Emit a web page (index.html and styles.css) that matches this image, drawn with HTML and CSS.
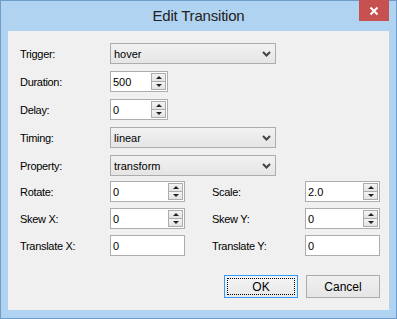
FILE: index.html
```html
<!DOCTYPE html>
<html lang="en">
<head>
  <meta charset="UTF-8">
  <title>Edit Transition</title>
  <link rel="stylesheet" href="styles.css">
</head>
<body>
  <div class="window">
    <div class="titlebar">
      <span class="title">Edit Transition</span>
      <div class="close">
        <svg width="10" height="10" viewBox="0 0 10 10"><path d="M1.5 1.5 L8.5 8.5 M8.5 1.5 L1.5 8.5" stroke="#fff" stroke-width="2"/></svg>
      </div>
    </div>

    <div class="content">
      <div class="fields">
        <label>Trigger:</label>
        <div class="select"><span>hover</span><svg class="chev" width="9" height="6" viewBox="0 0 9 6"><path d="M1 1 L4.5 4.5 L8 1" fill="none" stroke="#444" stroke-width="2"/></svg></div>

        <label>Duration:</label>
        <div class="box spin short"><span class="val">500</span><div class="arrows"><div class="arr up"></div><div class="arr down"></div></div></div>

        <label>Delay:</label>
        <div class="box spin short"><span class="val">0</span><div class="arrows"><div class="arr up"></div><div class="arr down"></div></div></div>

        <label>Timing:</label>
        <div class="select"><span>linear</span><svg class="chev" width="9" height="6" viewBox="0 0 9 6"><path d="M1 1 L4.5 4.5 L8 1" fill="none" stroke="#444" stroke-width="2"/></svg></div>

        <label>Property:</label>
        <div class="select"><span>transform</span><svg class="chev" width="9" height="6" viewBox="0 0 9 6"><path d="M1 1 L4.5 4.5 L8 1" fill="none" stroke="#444" stroke-width="2"/></svg></div>
      </div>

      <div class="transform">
        <label>Rotate:</label>
        <div class="box spin"><span class="val">0</span><div class="arrows"><div class="arr up"></div><div class="arr down"></div></div></div>
        <span></span>
        <label>Scale:</label>
        <div class="box spin"><span class="val">2.0</span><div class="arrows"><div class="arr up"></div><div class="arr down"></div></div></div>

        <label>Skew X:</label>
        <div class="box spin"><span class="val">0</span><div class="arrows"><div class="arr up"></div><div class="arr down"></div></div></div>
        <span></span>
        <label>Skew Y:</label>
        <div class="box spin"><span class="val">0</span><div class="arrows"><div class="arr up"></div><div class="arr down"></div></div></div>

        <label>Translate X:</label>
        <div class="box"><span class="val">0</span></div>
        <span></span>
        <label>Translate Y:</label>
        <div class="box"><span class="val">0</span></div>
      </div>

      <div class="actions">
        <div class="btn default">OK</div>
        <div class="btn">Cancel</div>
      </div>
    </div>
  </div>
</body>
</html>
```

FILE: styles.css
```css
body {
  margin: 0;
  font-family: "Liberation Sans", Arial, sans-serif;
  font-size: 11px;
  color: #000;
}

.window {
  width: 397px;
  height: 319px;
  box-sizing: border-box;
  border: 1px solid #6f9dc9;
  background: #afd3f0;
  padding: 0 7px 8px;
  display: flex;
  flex-direction: column;
}

.titlebar {
  height: 30px;
  position: relative;
  display: flex;
  align-items: center;
  justify-content: center;
}

.title {
  font-size: 15px;
  color: #222;
  padding-bottom: 1px;
  letter-spacing: -0.2px;
}

.close {
  position: absolute;
  top: -1px;
  right: 0;
  width: 30px;
  height: 21px;
  background: #c75050;
  display: flex;
  align-items: center;
  justify-content: center;
}

.content {
  flex: 1;
  background: #f0f0f0;
  padding: 12px 9px 0 12px;
}

label {
  letter-spacing: -0.3px;
}

.fields {
  display: grid;
  grid-template-columns: 90px 166px;
  grid-auto-rows: 21px;
  row-gap: 7px;
  align-items: center;
}

.transform {
  margin-top: 5px;
  display: grid;
  grid-template-columns: 90px 75px 27px 93px 75px;
  grid-auto-rows: 21px;
  row-gap: 6px;
  align-items: center;
}

.select {
  height: 21px;
  box-sizing: border-box;
  border: 1px solid #acacac;
  background: linear-gradient(#f2f2f2, #e5e5e5);
  display: flex;
  align-items: center;
  justify-content: space-between;
  padding: 0 4px 0 3px;
}

.box {
  height: 21px;
  box-sizing: border-box;
  border: 1px solid #abadb3;
  background: #fff;
  display: flex;
  align-items: center;
}

.short {
  width: 58px;
}

.val {
  flex: 1;
  padding-left: 2px;
}

.arrows {
  align-self: stretch;
  width: 15px;
  padding: 1px;
  display: flex;
  flex-direction: column;
}

.arr {
  flex: 1;
  border: 1px solid #acacac;
  background: linear-gradient(#f4f4f4, #e3e3e3);
  display: flex;
  align-items: center;
  justify-content: center;
}

.arr.down {
  border-top: 0;
}

.arr.up::before {
  content: "";
  border-left: 3px solid transparent;
  border-right: 3px solid transparent;
  border-bottom: 3px solid #222;
}

.arr.down::before {
  content: "";
  border-left: 3px solid transparent;
  border-right: 3px solid transparent;
  border-top: 3px solid #222;
}

.actions {
  margin-top: 19px;
  display: flex;
  justify-content: flex-end;
  gap: 8px;
}

.btn {
  width: 74px;
  height: 23px;
  box-sizing: border-box;
  border: 1px solid #acacac;
  background: linear-gradient(#f0f0f0, #e5e5e5);
  display: flex;
  align-items: center;
  justify-content: center;
  font-size: 12px;
}

.btn.default {
  border-color: #3399ff;
  background: linear-gradient(#f4f4f4, #e8e8e8);
  outline: 1px dotted #000;
  outline-offset: -4px;
}
```
